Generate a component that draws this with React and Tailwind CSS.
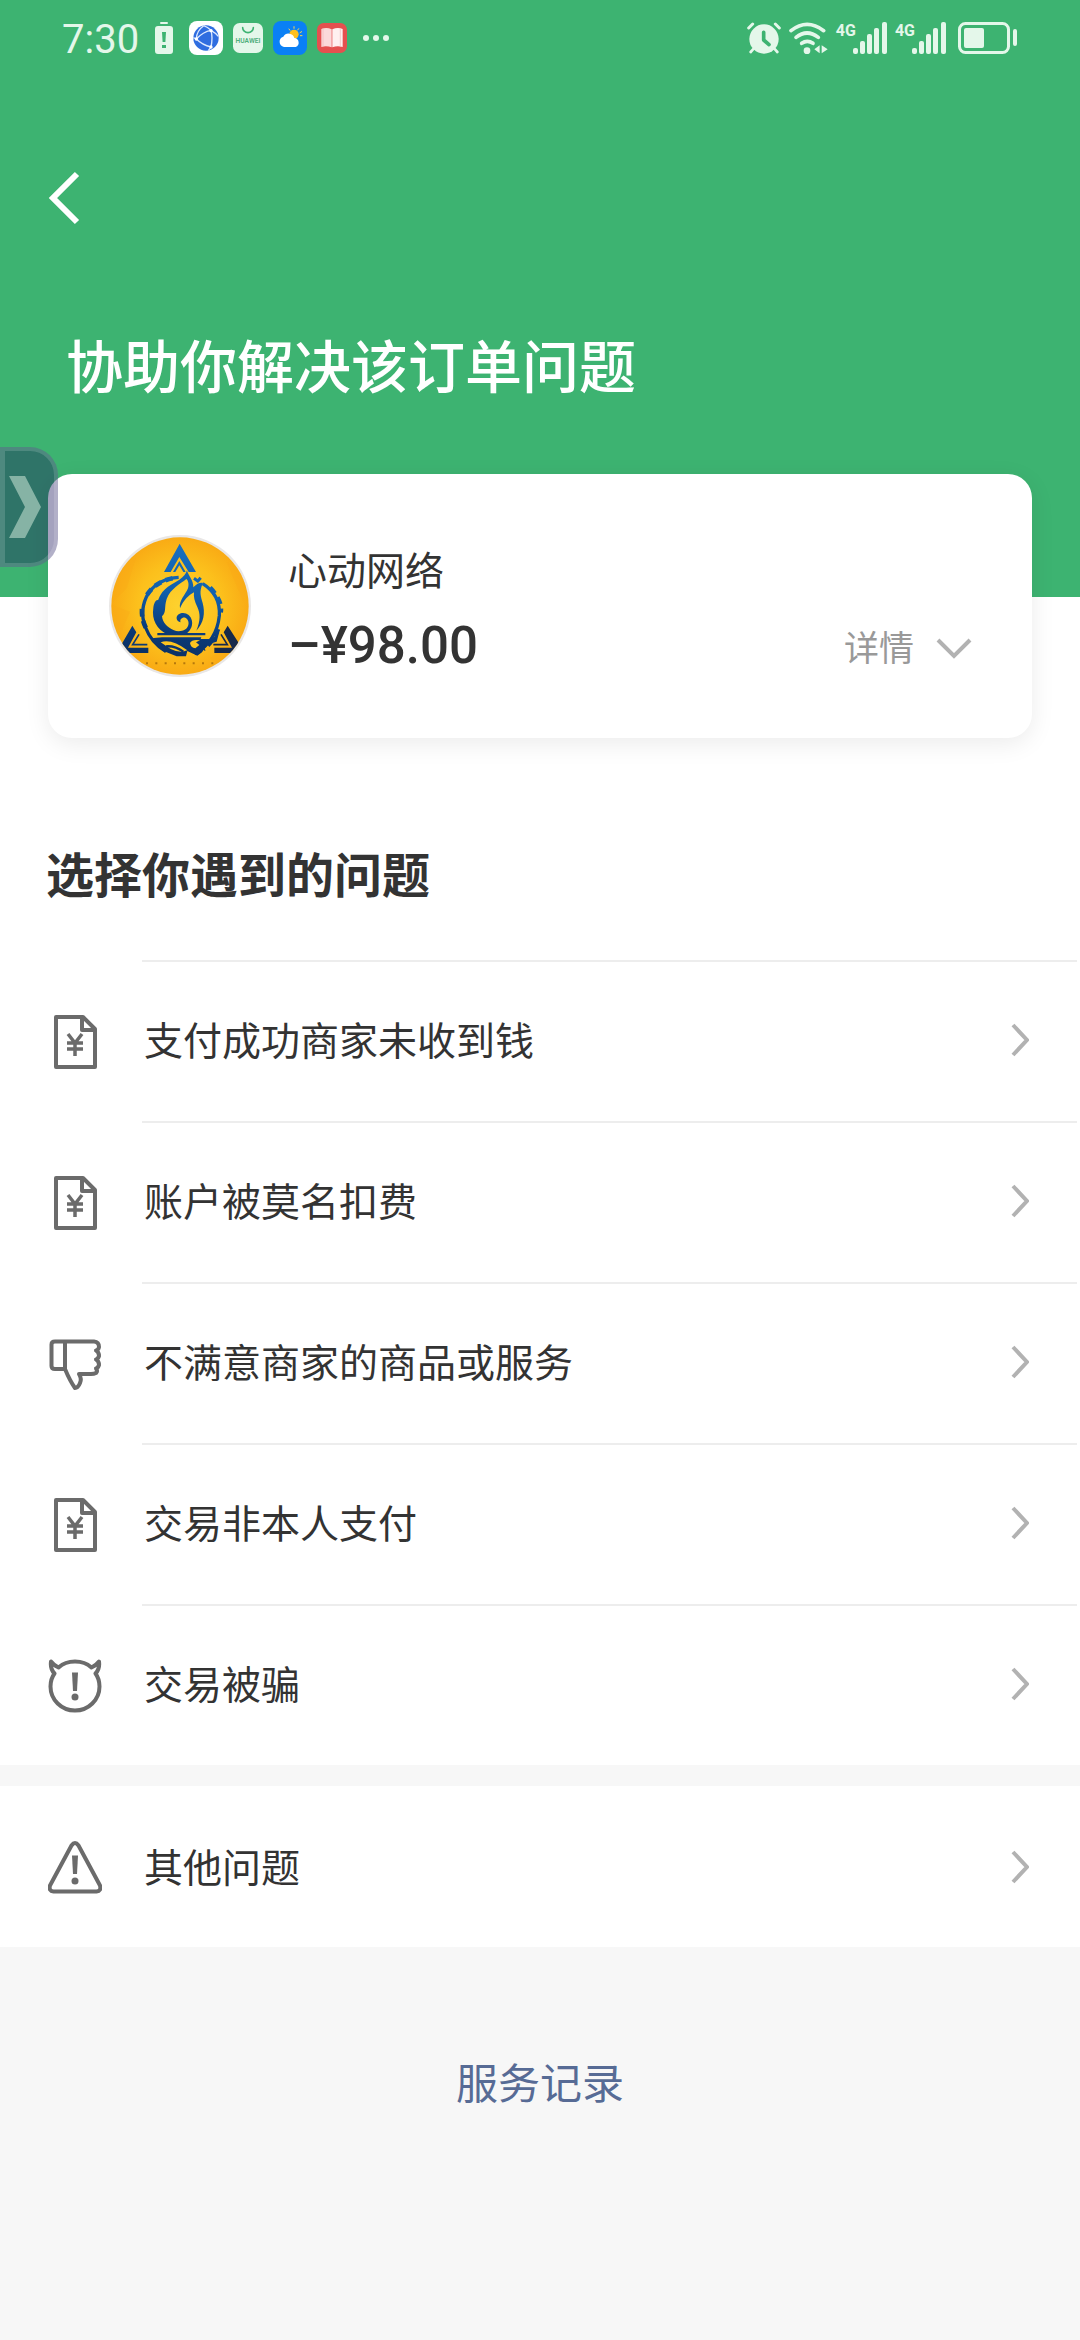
import React from "react";

const PALE = "#e4f7ea";
const INK = "#6b6b6b";

function LowBatteryIcon() {
  return (
    <svg width="18" height="32" viewBox="0 0 18 32" fill={PALE} aria-hidden="true">
      <rect x="5" y="0" width="8" height="2" rx="1" />
      <path
        fillRule="evenodd"
        d="M3 4h12a3 3 0 0 1 3 3v22a3 3 0 0 1-3 3H3a3 3 0 0 1-3-3V7a3 3 0 0 1 3-3zM7 10l.6 10h2.800L11 10zM7 23v3h4v-3z"
      />
    </svg>
  );
}

function GlobeAppIcon() {
  return (
    <svg width="34" height="34" viewBox="0 0 102 102" aria-hidden="true">
      <rect width="102" height="102" rx="24" fill="#fff" />
      <circle cx="51" cy="51" r="38" fill="#2f6de0" />
      <g fill="none" stroke="#dbe8ff" strokeWidth="4">
        <path d="M44 14Q22 30 22 54Q40 72 66 78" />
        <path d="M22 54Q42 32 66 28Q72 50 66 78" />
        <path d="M44 14Q56 18 66 28Q80 36 88 46M66 78L58 89M22 54L13 50" />
      </g>
      <g fill="#fff">
        <circle cx="22" cy="54" r="5" />
        <circle cx="66" cy="29" r="5" />
        <circle cx="66" cy="78" r="5" />
      </g>
    </svg>
  );
}

function HuaweiAppIcon() {
  return (
    <svg width="30" height="30" viewBox="0 0 90 90" aria-hidden="true">
      <rect width="90" height="90" rx="20" fill={PALE} />
      <path d="M29 14a16 15 0 0 0 32 0" fill="none" stroke="#3db371" strokeWidth="5" strokeLinecap="round" />
      <text x="45" y="60" textAnchor="middle" fontSize="20" fontWeight="600" fill="#4fae7b" fontFamily="Roboto, sans-serif">
        HUAWEI
      </text>
    </svg>
  );
}

function WeatherAppIcon() {
  return (
    <svg width="34" height="34" viewBox="0 0 102 102" aria-hidden="true">
      <rect width="102" height="102" rx="24" fill="#0a80f5" />
      <circle cx="63" cy="40" r="14" fill="#ffc01e" />
      <g stroke="#ffd34d" strokeWidth="3" strokeLinecap="round">
        <path d="M63 17v5M77 23l-3 4M86 32l-5 3M82 44h5M48 24l3 4" />
      </g>
      <path d="M33 78a16 16 0 0 1-2-31a18 18 0 0 1 33 4a14 14 0 0 1 4 27z" fill="#fff" />
    </svg>
  );
}

function BookAppIcon() {
  return (
    <svg width="30" height="30" viewBox="0 0 90 90" aria-hidden="true">
      <rect width="90" height="90" rx="20" fill="#e5504f" />
      <path d="M13 18q16-6 31 1v54q-16-6-31-1z" fill="#fbd9da" />
      <path d="M46 19q16-7 31-1v54q-16-5-31 1z" fill="#fff0f0" />
      <path d="M18 16v56M70 16v56" stroke="#f3b9ba" strokeWidth="2" />
    </svg>
  );
}

function AlarmIcon() {
  return (
    <svg width="34" height="32" viewBox="0 0 102 96" aria-hidden="true">
      <path d="M5 18L17 6M85 6L97 18" stroke={PALE} strokeWidth="9" strokeLinecap="round" />
      <path d="M20 80L11 90M82 80L91 90" stroke={PALE} strokeWidth="8" strokeLinecap="round" />
      <circle cx="51" cy="51" r="44" fill={PALE} />
      <path d="M50 31v23l16 14" fill="none" stroke="#3db371" strokeWidth="11" strokeLinecap="round" strokeLinejoin="round" />
    </svg>
  );
}

function WifiIcon() {
  return (
    <svg width="39" height="33" viewBox="0 0 117 99" aria-hidden="true">
      <g fill="none" stroke={PALE} strokeWidth="11" strokeLinecap="round">
        <path d="M6 26Q54-12 104 26" />
        <path d="M21 46Q54 20 88 46" />
        <path d="M38 64Q55 52 72 64" />
      </g>
      <circle cx="54" cy="86" r="10" fill={PALE} />
      <path d="M76 82L92 70V94zM98 70L116 82L98 94z" fill={PALE} />
    </svg>
  );
}

function Signal() {
  return (
    <div className="flex items-start">
      <span className="text-[16px] leading-[18px] font-bold">4G</span>
      <svg className="-ml-[3px]" width="34" height="32" viewBox="0 0 34 32" fill={PALE} aria-hidden="true">
        <rect x="0" y="26" width="5" height="6" rx="2" />
        <rect x="7" y="19" width="5" height="13" rx="2" />
        <rect x="14" y="12" width="5" height="20" rx="2" />
        <rect x="21" y="6" width="5" height="26" rx="2" />
        <rect x="29" y="0" width="5" height="32" rx="2" />
      </svg>
    </div>
  );
}

function BatteryIcon() {
  return (
    <svg width="60" height="32" viewBox="0 0 60 32" aria-hidden="true">
      <rect x="1.500" y="1.500" width="49" height="29" rx="6" fill="none" stroke={PALE} strokeWidth="3" />
      <rect x="6" y="6" width="20" height="20" rx="2" fill={PALE} />
      <rect x="55" y="7" width="4" height="17" rx="2" fill={PALE} />
    </svg>
  );
}

function StatusBar() {
  return (
    <div className="flex h-[76px] items-center justify-between pr-[62px] pl-[62px] text-[#e4f7ea]">
      <div className="flex items-center gap-[10px]">
        <span className="mr-[6px] pt-[4px] font-[Roboto,sans-serif] text-[40px] leading-[48px]">7:30</span>
        <span className="mr-[6px]">
          <LowBatteryIcon />
        </span>
        <GlobeAppIcon />
        <HuaweiAppIcon />
        <WeatherAppIcon />
        <BookAppIcon />
        <svg className="ml-[6px]" width="26" height="6" viewBox="0 0 26 6" fill={PALE} aria-hidden="true">
          <circle cx="3" cy="3" r="3" />
          <circle cx="13" cy="3" r="3" />
          <circle cx="23" cy="3" r="3" />
        </svg>
      </div>
      <div className="flex items-center gap-2 font-[Roboto,sans-serif]">
        <AlarmIcon />
        <WifiIcon />
        <Signal />
        <Signal />
        <div className="ml-[4px]">
          <BatteryIcon />
        </div>
      </div>
    </div>
  );
}

function MerchantLogo() {
  return (
    <svg className="size-[142px] shrink-0" viewBox="27 30 426 426" role="img" aria-label="心动网络">
      <defs>
        <radialGradient id="gold">
          <stop offset="0" stopColor="#fdd22f" />
          <stop offset="0.6" stopColor="#fcc01c" />
          <stop offset="1" stopColor="#f9a914" />
        </radialGradient>
        <linearGradient id="blue" gradientUnits="userSpaceOnUse" x1="270" y1="60" x2="220" y2="390">
          <stop offset="0" stopColor="#1a6fc0" />
          <stop offset="0.45" stopColor="#105fab" />
          <stop offset="0.8" stopColor="#0a3a78" />
          <stop offset="1" stopColor="#0b3266" />
        </linearGradient>
        <clipPath id="disc">
          <circle cx="240" cy="243" r="206" />
        </clipPath>
      </defs>
      <circle cx="240" cy="243" r="213" fill="#e9e7e6" />
      <g clipPath="url(#disc)">
        <rect x="27" y="30" width="426" height="426" fill="url(#gold)" />
        <path d="M60 120L110 90L80 190L40 230zM36 240L90 260L60 330zM380 110L440 150L430 230zM330 400L400 350L380 430z" fill="#f9ab17" opacity="0.4" />
        <g fill="url(#blue)">
          <path d="M239 56L288 141H266L238 96L212 141H192z" />
          <path d="M238 108L257 141H250L238 121L226 141H219z" />
          <path d="M97 302L109 322L84 368H145V384H60V366z" />
        </g>
        <path d="M117 328L98 359H142" fill="none" stroke="#0d3b74" strokeWidth="5" />
        <path d="M383 302L371 322L396 368H343V384H424V366z" fill="#17294a" />
        <path d="M363 328L382 359H340" fill="none" stroke="#17294a" strokeWidth="5" />
        <g fill="none" stroke="url(#blue)">
          <path d="M236 157Q178 160 146 203Q116 254 136 306Q154 354 198 380" strokeWidth="10" />
          <path d="M308 176Q362 210 358 272Q350 350 284 386" strokeWidth="10" />
          <path d="M218 160Q158 172 134 222M126 252Q124 288 142 316M330 188Q368 228 362 262M354 312Q340 350 310 372" strokeWidth="14" strokeDasharray="22 14" />
          <path d="M282 160l14 10M302 158l-10 12" strokeWidth="9" />
        </g>
        <path
          d="M261 136C264 152 281 165 280 187C292 175 300 172 309 174C296 200 303 216 308 234C316 264 312 292 289 317C302 286 301 266 292 246C284 230 280 216 282 202C266 210 250 226 240 250C236 226 256 210 264 190C268 176 264 166 259 162C240 178 212 190 200 222C192 246 200 262 186 274C188 292 200 306 222 316C234 322 252 318 260 310C270 298 266 282 256 278C246 276 238 284 242 292C228 290 226 274 236 268C250 258 272 266 276 288C279 306 268 320 258 327H200C172 312 154 286 160 248C162 232 170 222 174 226C188 186 216 180 238 164C252 154 258 146 261 136z"
          fill="url(#blue)"
        />
        <path d="M172 324H316V331H172zM186 337H304L302 342H336L358 320L350 350L322 358L306 382L292 392L262 378L258 394H230L196 380L154 340z" fill="url(#blue)" />
        <path d="M182 352Q214 340 262 376Q240 386 212 372zM270 354Q276 342 300 346L288 352L298 360L286 370Q272 368 270 354z" fill="#fcc41f" />
        <path d="M198 364Q226 362 250 380" fill="none" stroke="url(#blue)" strokeWidth="7" />
        <path d="M138 415H346" stroke="#b5780d" strokeWidth="6" strokeDasharray="6 22" />
      </g>
    </svg>
  );
}

function BillIcon() {
  return (
    <svg width="54" height="54" viewBox="0 0 54 54" fill="none" stroke={INK} strokeWidth="4" strokeLinejoin="round" aria-hidden="true">
      <path d="M8 2H35L47 14V52H8z" />
      <path d="M34 3V15H47" />
      <path d="M20 19L27 28L34 19M27 28V41M19 28H35M19 34H35" strokeWidth="3.500" />
    </svg>
  );
}

function DislikeIcon() {
  return (
    <svg width="54" height="54" viewBox="0 0 54 54" fill="none" stroke={INK} strokeWidth="4" strokeLinejoin="round" strokeLinecap="round" aria-hidden="true">
      <path d="M17 4.500V32H7Q3.500 32 3.500 29V7.500Q3.500 4.500 7 4.500H46Q51 5 51 10Q50.500 13 48 13.500Q51 15 51 19Q50 22 48 22.500Q51 24 51 28Q50 31 48 31.500Q50 34 48 36Q46 37 43 37H31Q34 42 32 46Q30 51 27 51Q22 44 17 32" />
    </svg>
  );
}

function DevilIcon() {
  return (
    <svg width="54" height="54" viewBox="0 0 54 54" fill="none" stroke={INK} strokeWidth="4" strokeLinejoin="round" aria-hidden="true">
      <path d="M10.500 8.500Q17 2.500 27 2.500T43.500 8.500Q48 6.500 51 2.500Q52 10 47.500 14.500Q51.500 20 51.500 27.500A24.500 24 0 0 1 2.500 27.500Q2.500 20 6.500 14.500Q2 10 3 2.500Q6 6.500 10.500 8.500z" />
      <path d="M24 13.500H30L29 32H25z" fill={INK} stroke="none" />
      <circle cx="27" cy="38" r="3.500" fill={INK} stroke="none" />
    </svg>
  );
}

function WarningIcon() {
  return (
    <svg width="54" height="54" viewBox="0 0 54 54" fill="none" stroke={INK} strokeWidth="4" strokeLinejoin="round" aria-hidden="true">
      <path d="M23.500 4.500Q27 -0.500 30.500 4.500L52 44.500Q53.500 50 48.500 50.500H5.500Q0.500 50 2 44.500z" />
      <path d="M24 14.500H30L29 33H25z" fill={INK} stroke="none" />
      <circle cx="27" cy="40" r="3.500" fill={INK} stroke="none" />
    </svg>
  );
}

function RowChevron() {
  return (
    <svg className="shrink-0" width="18" height="34" viewBox="0 0 18 34" fill="none" stroke="#b2b2b2" strokeWidth="4" aria-hidden="true">
      <path d="M2 2L16 17L2 32" />
    </svg>
  );
}

function ProblemRow({ icon: Icon, label, divided }) {
  return (
    <button type="button" className="flex w-full items-stretch bg-white pl-[48px] text-left">
      <span className="flex w-[94px] shrink-0 items-center pt-[2px]">
        <Icon />
      </span>
      <span
        className={
          divided
            ? "mr-[3px] flex h-[161px] grow items-center justify-between border-t-2 border-[#ededed] pr-[48px] pb-[4px]"
            : "mr-[3px] flex h-[161px] grow items-center justify-between pr-[48px]"
        }
      >
        <span className="pb-[4px] pl-[2px] text-[39px] leading-[56px] text-[#333]">{label}</span>
        <RowChevron />
      </span>
    </button>
  );
}

const problems = [
  { icon: BillIcon, label: "支付成功商家未收到钱" },
  { icon: BillIcon, label: "账户被莫名扣费" },
  { icon: DislikeIcon, label: "不满意商家的商品或服务" },
  { icon: BillIcon, label: "交易非本人支付" },
  { icon: DevilIcon, label: "交易被骗" },
];

export default function App() {
  return (
    <div lang="zh-CN" className="relative min-h-screen bg-[#f7f7f7] font-['Noto_Sans_CJK_SC',sans-serif] text-[#333]">
      <header className="bg-[#3db371] pb-[198px]">
        <StatusBar />
        <button type="button" aria-label="返回" className="mt-[92px] ml-[40px] flex h-[60px] w-[60px] items-center">
          <svg className="ml-[8px]" width="34" height="54" viewBox="0 0 34 54" fill="none" stroke="#fff" strokeWidth="6" aria-hidden="true">
            <path d="M29 3L5 27L29 51" />
          </svg>
        </button>
        <h1 className="mt-[99px] px-[66px] text-[57px] leading-[72px] font-medium text-white">协助你解决该订单问题</h1>
      </header>

      <main>
        <div className="flow-root bg-white">
          <section className="relative mx-[48px] -mt-[123px] flex h-[264px] items-center rounded-[24px] bg-white pr-[60px] pl-[61px] shadow-[0_6px_24px_rgba(0,0,0,0.08)]">
            <MerchantLogo />
            <div className="ml-[37px] grow pt-[16px]">
              <div className="text-[39px] leading-[56px]">心动网络</div>
              <div className="flex items-center justify-between">
                <span className="pt-[8px] font-[Roboto,sans-serif] text-[51px] leading-[84px] font-medium">–¥98.00</span>
                <button type="button" className="flex items-center gap-[22px] pt-[8px] text-[35px] leading-[48px] text-[#999]">
                  详情
                  <svg className="mt-[6px]" width="36" height="22" viewBox="0 0 36 22" fill="none" stroke="#b2b2b2" strokeWidth="4" aria-hidden="true">
                    <path d="M2 2L18 18L34 2" />
                  </svg>
                </button>
              </div>
            </div>
          </section>

          <h2 className="px-[46px] pt-[102px] pb-[56px] text-[48px] leading-[64px] font-bold">选择你遇到的问题</h2>
        </div>

        <ul>
          {problems.map((item) => (
            <li key={item.label}>
              <ProblemRow icon={item.icon} label={item.label} divided />
            </li>
          ))}
          <li className="mt-[21px]">
            <ProblemRow icon={WarningIcon} label="其他问题" />
          </li>
        </ul>

        <div className="pt-[104px] text-center">
          <a href="#records" className="text-[42px] leading-[60px] text-[#576b95]">
            服务记录
          </a>
        </div>
      </main>

      <button
        type="button"
        aria-label="展开侧边栏"
        className="absolute top-[447px] left-0 flex h-[120px] w-[58px] items-center rounded-r-[28px] border-y-4 border-r-4 border-l-[5px] border-white/15 bg-[rgba(27,22,92,0.4)]"
      >
        <svg className="ml-[4px]" width="33" height="62" viewBox="0 0 33 62" fill="#86b3a5" aria-hidden="true">
          <path d="M0 0H16L32 31L16 62H0L16 31z" />
        </svg>
      </button>
    </div>
  );
}
